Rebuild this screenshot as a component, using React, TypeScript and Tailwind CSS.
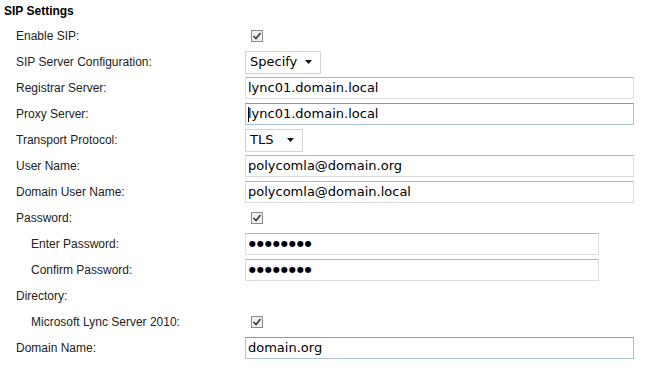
import React from "react";

type Field =
  | { kind: "check"; label: string; indent?: boolean }
  | { kind: "select"; label: string; value: string; width: string }
  | { kind: "text"; label: string; value: string; focus?: boolean; indent?: boolean; short?: boolean; password?: boolean }
  | { kind: "none"; label: string; indent?: boolean };

const fields: Field[] = [
  { kind: "check", label: "Enable SIP:" },
  { kind: "select", label: "SIP Server Configuration:", value: "Specify", width: "w-[76px]" },
  { kind: "text", label: "Registrar Server:", value: "lync01.domain.local" },
  { kind: "text", label: "Proxy Server:", value: "lync01.domain.local", focus: true },
  { kind: "select", label: "Transport Protocol:", value: "TLS", width: "w-[58px]" },
  { kind: "text", label: "User Name:", value: "polycomla@domain.org" },
  { kind: "text", label: "Domain User Name:", value: "polycomla@domain.local" },
  { kind: "check", label: "Password:" },
  { kind: "text", label: "Enter Password:", value: "", indent: true, short: true, password: true },
  { kind: "text", label: "Confirm Password:", value: "", indent: true, short: true, password: true },
  { kind: "none", label: "Directory:" },
  { kind: "check", label: "Microsoft Lync Server 2010:", indent: true },
  { kind: "text", label: "Domain Name:", value: "domain.org", focus: true },
];

function CheckBox() {
  return (
    <span className="ml-[6px] flex h-[12px] w-[12px] items-center justify-center border border-[#8c8c8c] bg-[#f0f0f0]">
      <svg width="10" height="10" viewBox="0 0 10 10">
        <path d="M1.5 5 L4 7.5 L8.5 2" stroke="#3a3a3a" strokeWidth="1.6" fill="none" />
      </svg>
    </span>
  );
}

function Select({ value, width }: { value: string; width: string }) {
  return (
    <div className={`flex h-[23px] ${width} items-center justify-between border border-[#d4d4d4] bg-white pl-[4px] pr-[8px] font-['DejaVu_Sans',sans-serif] text-[13px] text-black`}>
      <span>{value}</span>
      <svg width="7" height="4" viewBox="0 0 7 4">
        <path d="M0 0 H7 L3.5 4 Z" fill="#111" />
      </svg>
    </div>
  );
}

function TextBox({ value, focus, short, password }: { value: string; focus?: boolean; short?: boolean; password?: boolean }) {
  const border = focus
    ? "border-[#a9c4d9] border-t-[#7f9db5]"
    : "border-[#dcdcdc] border-t-[#b4b4b4]";
  return (
    <div
      className={`flex h-[22px] ${short ? "w-[354px]" : "w-[389px]"} items-center border ${border} bg-white pl-[2px] font-['DejaVu_Sans',sans-serif] text-[13px] text-black`}
    >
      {focus && value.startsWith("lync") && <span className="mr-[-1px] h-[15px] w-px bg-black" />}
      {password ? (
        <span className="pl-[1px] text-[8px] tracking-[1px]">●●●●●●●●</span>
      ) : (
        <span>{value}</span>
      )}
    </div>
  );
}

export default function App() {
  return (
    <div className="h-[380px] w-[661px] bg-white font-['Liberation_Sans',Arial,sans-serif] text-[12px] text-[#222]">
      <div className="h-[23px] pl-[4px] pt-[2px] text-[12px] font-bold text-black">SIP Settings</div>
      <div className="flex flex-col pl-[16px]">
        {fields.map((f) => (
          <div key={f.label} className="flex h-[26px] items-center">
            <div className={`w-[229px] ${"indent" in f && f.indent ? "pl-[15px]" : ""}`}>{f.label}</div>
            {f.kind === "check" && <CheckBox />}
            {f.kind === "select" && <Select value={f.value} width={f.width} />}
            {f.kind === "text" && (
              <TextBox value={f.value} focus={f.focus} short={f.short} password={f.password} />
            )}
          </div>
        ))}
      </div>
    </div>
  );
}
